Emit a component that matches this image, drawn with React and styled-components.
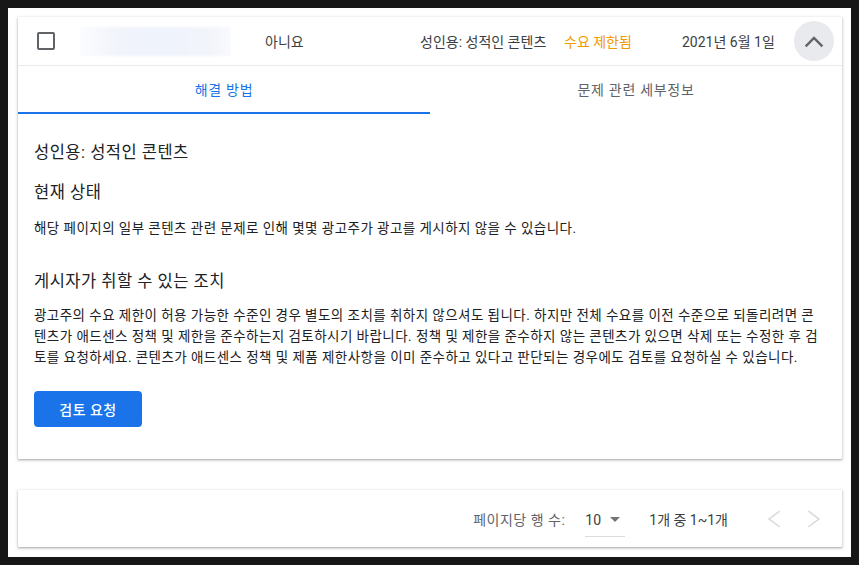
import React from 'react';
import styled, { createGlobalStyle } from 'styled-components';

const GlobalStyle = createGlobalStyle`
  html, body {
    margin: 0;
    background: #171717;
  }

  body {
    font-family: Roboto, "Noto Sans CJK KR", sans-serif;
    color: #202124;
  }
`;

const Page = styled.div`
  box-sizing: border-box;
  margin: 8px;
  height: 549px;
  background: #fff;
  padding: 9px 9px 10px 10px;
  display: flex;
  flex-direction: column;
  gap: 31px;
`;

const Card = styled.div`
  background: #fff;
  border-radius: 1px;
  box-shadow: 0 1px 2px rgba(60, 64, 67, 0.3), 0 1px 3px 1px rgba(60, 64, 67, 0.15);
`;

const HeaderRow = styled.div`
  display: flex;
  align-items: center;
  height: 48px;
  padding: 0 8px 0 19px;
  border-bottom: 1px solid #e8eaed;
  font-size: 14px;
  color: #3c4043;
`;

const Cell = styled.div`
  flex: 0 0 ${({ $w }) => $w}px;
  color: ${({ $color }) => $color || 'inherit'};
  white-space: nowrap;
`;

const Checkbox = styled.span`
  display: block;
  box-sizing: border-box;
  width: 18px;
  height: 18px;
  border: 2px solid #5f6368;
  border-radius: 2px;
`;

const Redacted = styled.div`
  width: 151px;
  height: 29px;
  background: linear-gradient(
    to right,
    #fbfcfe 0%,
    #f1f4fb 25%,
    #eff3fb 60%,
    #f3f5fb 90%,
    #fafbfe 100%
  );
  filter: blur(1px);
`;

const IconButton = styled.button`
  flex: 0 0 40px;
  width: 40px;
  height: 40px;
  padding: 0;
  border: none;
  border-radius: 50%;
  background: ${({ $active }) => ($active ? '#e8eaed' : 'transparent')};
  display: flex;
  align-items: center;
  justify-content: center;
  cursor: pointer;

  svg {
    display: block;
  }
`;

const Tabs = styled.div`
  display: flex;
`;

const Tab = styled.div`
  flex: 1;
  height: 48px;
  box-sizing: border-box;
  display: flex;
  align-items: center;
  justify-content: center;
  font-size: 14px;
  letter-spacing: 0.7px;
  color: ${({ $active }) => ($active ? '#1a73e8' : '#5f6368')};
  border-bottom: 2px solid ${({ $active }) => ($active ? '#1a73e8' : 'transparent')};
`;

const Content = styled.div`
  padding: 27px 16px 32px;
`;

const Heading = styled.h3`
  margin: ${({ $top }) => $top}px 0 0;
  font-size: 16.5px;
  letter-spacing: 0.5px;
  font-weight: 400;
  line-height: 24px;
  color: #202124;
`;

const Text = styled.p`
  margin: ${({ $top }) => $top}px 0 0;
  font-size: 13.5px;
  letter-spacing: 0.45px;
  line-height: ${({ $lh }) => $lh || 20}px;
  color: #202124;
`;

const PrimaryButton = styled.button`
  margin-top: 23px;
  width: 108px;
  height: 36px;
  border: none;
  border-radius: 4px;
  background: #1a73e8;
  color: #fff;
  font-family: inherit;
  font-size: 14px;
  font-weight: 500;
  letter-spacing: 0.5px;
  cursor: pointer;
`;

const Pager = styled.div`
  height: 57px;
  display: flex;
  align-items: center;
  justify-content: flex-end;
  padding-right: 8px;
  font-size: 14px;
  color: #5f6368;
`;

const Label = styled.span`
  letter-spacing: 0.5px;
`;

const Select = styled.div`
  margin-left: 20px;
  width: 40px;
  height: 36px;
  box-sizing: border-box;
  padding-top: 3px;
  display: flex;
  align-items: center;
  gap: 9px;
  border-bottom: 1px solid #dadce0;
  color: #3c4043;
`;

const Caret = styled.span`
  width: 0;
  height: 0;
  border-left: 5px solid transparent;
  border-right: 5px solid transparent;
  border-top: 5px solid #757575;
`;

const Range = styled.span`
  margin: 0 26px 0 24px;
  color: #3c4043;
`;

const Chevron = ({ points, color, width }) => (
  <svg width="40" height="40" viewBox="0 0 40 40">
    <polyline
      points={points}
      fill="none"
      stroke={color}
      strokeWidth={width}
      strokeLinecap="square"
    />
  </svg>
);

const App = () => (
  <>
    <GlobalStyle />
    <Page>
      <Card>
        <HeaderRow>
          <Cell $w={43}>
            <Checkbox />
          </Cell>
          <Cell $w={185}>
            <Redacted />
          </Cell>
          <Cell $w={155}>아니요</Cell>
          <Cell $w={144}>성인용: 성적인 콘텐츠</Cell>
          <Cell $w={118} $color="#f29900">
            수요 제한됨
          </Cell>
          <Cell $w={112}>2021년 6월 1일</Cell>
          <IconButton $active aria-label="접기">
            <Chevron points="12.5,24.5 20,17 27.5,24.5" color="#5f6368" width={2.4} />
          </IconButton>
        </HeaderRow>
        <Tabs>
          <Tab $active>해결 방법</Tab>
          <Tab>문제 관련 세부정보</Tab>
        </Tabs>
        <Content>
          <Heading $top={0}>성인용: 성적인 콘텐츠</Heading>
          <Heading $top={16}>현재 상태</Heading>
          <Text $top={13}>
            해당 페이지의 일부 콘텐츠 관련 문제로 인해 몇몇 광고주가 광고를 게시하지 않을 수 있습니다.
          </Text>
          <Heading $top={32}>게시자가 취할 수 있는 조치</Heading>
          <Text $top={11} $lh={21}>
            광고주의 수요 제한이 허용 가능한 수준인 경우 별도의 조치를 취하지 않으셔도 됩니다. 하지만
            전체 수요를 이전 수준으로 되돌리려면 콘텐츠가 애드센스 정책 및 제한을 준수하는지
            검토하시기 바랍니다. 정책 및 제한을 준수하지 않는 콘텐츠가 있으면 삭제 또는 수정한 후
            검토를 요청하세요. 콘텐츠가 애드센스 정책 및 제품 제한사항을 이미 준수하고 있다고
            판단되는 경우에도 검토를 요청하실 수 있습니다.
          </Text>
          <PrimaryButton>검토 요청</PrimaryButton>
        </Content>
      </Card>
      <Card>
        <Pager>
          <Label>페이지당 행 수:</Label>
          <Select>
            <span>10</span>
            <Caret />
          </Select>
          <Range>1개 중 1~1개</Range>
          <IconButton aria-label="이전 페이지">
            <Chevron points="25,12.5 15,20 25,27.5" color="#dadce0" width={1.6} />
          </IconButton>
          <IconButton aria-label="다음 페이지">
            <Chevron points="15,12.5 25,20 15,27.5" color="#dadce0" width={1.6} />
          </IconButton>
        </Pager>
      </Card>
    </Page>
  </>
);

export default App;
